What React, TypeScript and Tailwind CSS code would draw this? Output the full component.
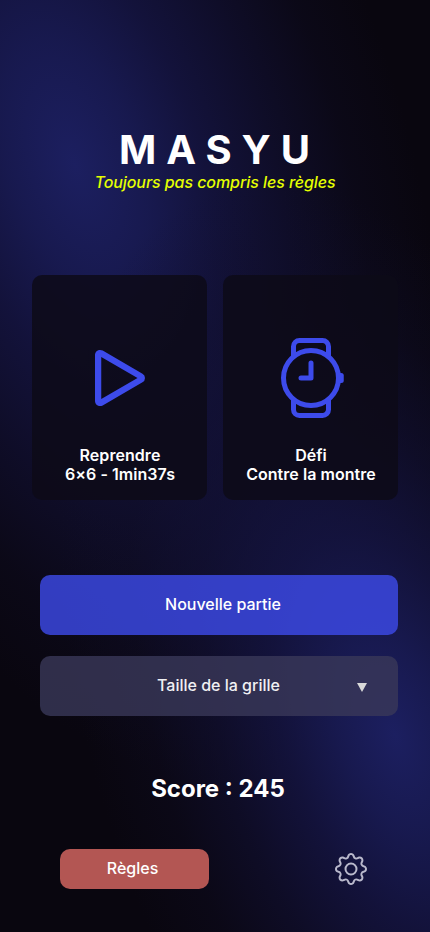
import React, { useState } from "react";
import { BsGear, BsPlay } from "react-icons/bs";

// create types
interface ModeCardProps {
  icon: React.ReactNode;
  title: string;
  subtitle: string;
}

// outlined wrist watch, the straps stay hollow
const WatchIcon = () => (
  <svg width="80" height="80" viewBox="0 0 80 80" fill="none">
    <g stroke="currentColor" strokeWidth="5" strokeLinecap="round">
      <circle cx="40" cy="40" r="27.5" />
      <path
        d="M22.5 19V8.500a6 6 0 0 1 6-6h23a6 6 0 0 1 6 6V19M22.5 61v10.500a6 6 0 0 0 6 6h23a6 6 0 0 0 6-6V61"
        strokeLinecap="butt"
      />
      <path d="M40 25v15H30" strokeLinejoin="round" />
    </g>
    <path
      d="M69 35h1.250a2.500 2.500 0 0 1 2.500 2.500v5a2.500 2.500 0 0 1-2.500 2.500H69z"
      fill="currentColor"
    />
  </svg>
);

// card used for the two main game modes
const ModeCard = ({ icon, title, subtitle }: ModeCardProps) => (
  <button className="flex h-[225px] w-[175px] flex-col items-center rounded-[10px] bg-[#0d0a17]/85 pt-[53px] text-center text-base leading-[19px] font-semibold tracking-[0.05px]">
    <span className="flex h-[100px] items-center text-[#3d4beb]">{icon}</span>
    <span className="mt-[18px] pl-px">{title}</span>
    <span className="pl-px whitespace-nowrap">{subtitle}</span>
  </button>
);

// two tilted blue glows behind the page
const Glows = () => (
  <div className="pointer-events-none absolute inset-0 -z-10">
    <div className="absolute top-[-475px] left-[-255px] h-[1280px] w-[660px] -rotate-[18deg] bg-[radial-gradient(closest-side,#1c1f60_0%,#191b55e8_20%,#161648c4_38%,#13123a90_60%,#100e2a4d_80%,transparent_100%)]" />
    <div className="absolute top-[155px] left-[95px] h-[1160px] w-[600px] -rotate-[18deg] bg-[radial-gradient(closest-side,#1c1f60_0%,#191b55e8_18%,#161648c0_36%,#13123a88_57%,#100e2a48_78%,transparent_100%)]" />
  </div>
);

function App() {
  // create state variable for the best score
  const [score] = useState<number>(245);

  return (
    <div className="relative isolate flex h-[932px] w-[430px] flex-col overflow-hidden bg-[#09060f] font-['Inter',sans-serif] text-white">
      <Glows />

      <header className="flex flex-col items-center pt-[126px]">
        <h1 className="pl-[9px] text-[40px] leading-[48px] font-bold tracking-[10px]">
          MASYU
        </h1>
        <p className="-mt-px text-base leading-[19px] font-medium tracking-[-0.07px] text-[#e5ff00] italic">
          Toujours pas compris les règles
        </p>
      </header>

      <div className="mt-[83px] flex gap-4 pl-8">
        <ModeCard
          icon={<BsPlay size={100} />}
          title="Reprendre"
          subtitle="6×6 - 1min37s"
        />
        <ModeCard
          icon={<WatchIcon />}
          title="Défi"
          subtitle="Contre la montre"
        />
      </div>

      <div className="mt-[75px] mr-8 ml-10 flex flex-col gap-[21px] text-base font-medium">
        <button className="h-[60px] rounded-[10px] bg-[#3d4beb]/80 pb-[2px] pl-[8px]">
          Nouvelle partie
        </button>
        <button className="grid h-[60px] grid-cols-[1fr_auto_1fr] items-center rounded-[10px] bg-[#393859]/80 text-[#f0f0f3]">
          <span />
          <span className="pr-px pb-[2px]">Taille de la grille</span>
          <svg
            className="mt-[3px] mr-[31px] justify-self-end"
            width="10"
            height="9"
            viewBox="0 0 10 9"
            fill="#d9d9d9"
          >
            <path d="M0 0h10L5 9z" />
          </svg>
        </button>
      </div>

      <p className="mt-[58px] pl-[6px] text-center text-2xl leading-[29px] font-bold">
        Score : {score}
      </p>

      <footer className="mt-[46px] flex items-center justify-between pr-[63px] pl-[60px]">
        <button className="h-10 w-[149px] rounded-[10px] bg-[#b35653] pr-[4px] pb-[2px] text-base font-medium">
          Règles
        </button>
        <button aria-label="Paramètres" className="text-[#b9b9cc]">
          <BsGear size={32} />
        </button>
      </footer>
    </div>
  );
}

export default App;
